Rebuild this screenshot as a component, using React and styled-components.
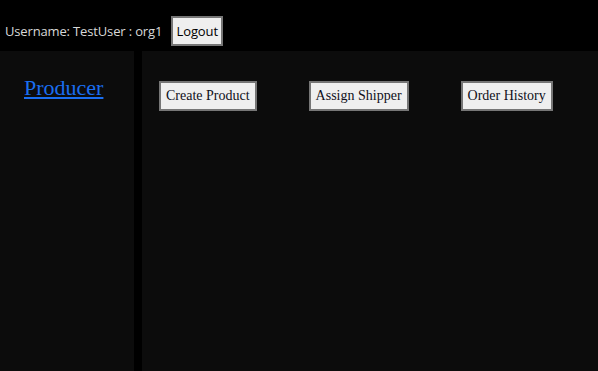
import React from "react";
import styled, { createGlobalStyle } from "styled-components";

const Global = createGlobalStyle`
  html, body { margin: 0; padding: 0; background: #000; }
  body { width: 598px; height: 371px; overflow: hidden; }
  #root { height: 371px; }
`;

const Page = styled.div`
  display: flex;
  flex-direction: column;
  height: 371px;
  background: #000;
`;

const Header = styled.header`
  display: flex;
  align-items: center;
  height: 51px;
  padding: 11px 0 0 5px;
  box-sizing: border-box;
  gap: 9px;
`;

const UserText = styled.span`
  font-family: "Open Sans", "Noto Sans", sans-serif;
  font-size: 13px;
  letter-spacing: -0.15px;
  color: #d8d8d8;
`;

const LogoutButton = styled.button`
  height: 30px;
  width: 52px;
  padding: 0;
  box-sizing: border-box;
  background: #efefef;
  border: 2px solid #767676;
  font-family: "Open Sans", "Noto Sans", sans-serif;
  font-size: 13px;
  letter-spacing: -0.1px;
  color: #000;
`;

const Body = styled.div`
  flex: 1;
  display: flex;
  gap: 8px;
`;

const Sidebar = styled.nav`
  width: 134px;
  background: #0c0c0c;
  padding-top: 24px;
  padding-left: 24px;
  box-sizing: border-box;
`;

const NavLink = styled.a`
  font-family: "Liberation Serif", serif;
  font-size: 22px;
  color: #1a6ef0;
  text-decoration: underline;
`;

const Main = styled.main`
  flex: 1;
  background: #0c0c0c;
  display: flex;
  align-items: flex-start;
  padding: 30px 0 0 17px;
  gap: 52px;
`;

const ActionButton = styled.button`
  height: 30px;
  padding: 0 5px;
  box-sizing: border-box;
  background: #efefef;
  border: 2px solid #767676;
  font-family: "Liberation Serif", serif;
  font-size: 14px;
  color: #101020;
`;

export default function App() {
  return (
    <Page>
      <Global />
      <Header>
        <UserText>Username: TestUser : org1</UserText>
        <LogoutButton>Logout</LogoutButton>
      </Header>
      <Body>
        <Sidebar>
          <NavLink href="#">Producer</NavLink>
        </Sidebar>
        <Main>
          <ActionButton>Create Product</ActionButton>
          <ActionButton>Assign Shipper</ActionButton>
          <ActionButton>Order History</ActionButton>
        </Main>
      </Body>
    </Page>
  );
}
